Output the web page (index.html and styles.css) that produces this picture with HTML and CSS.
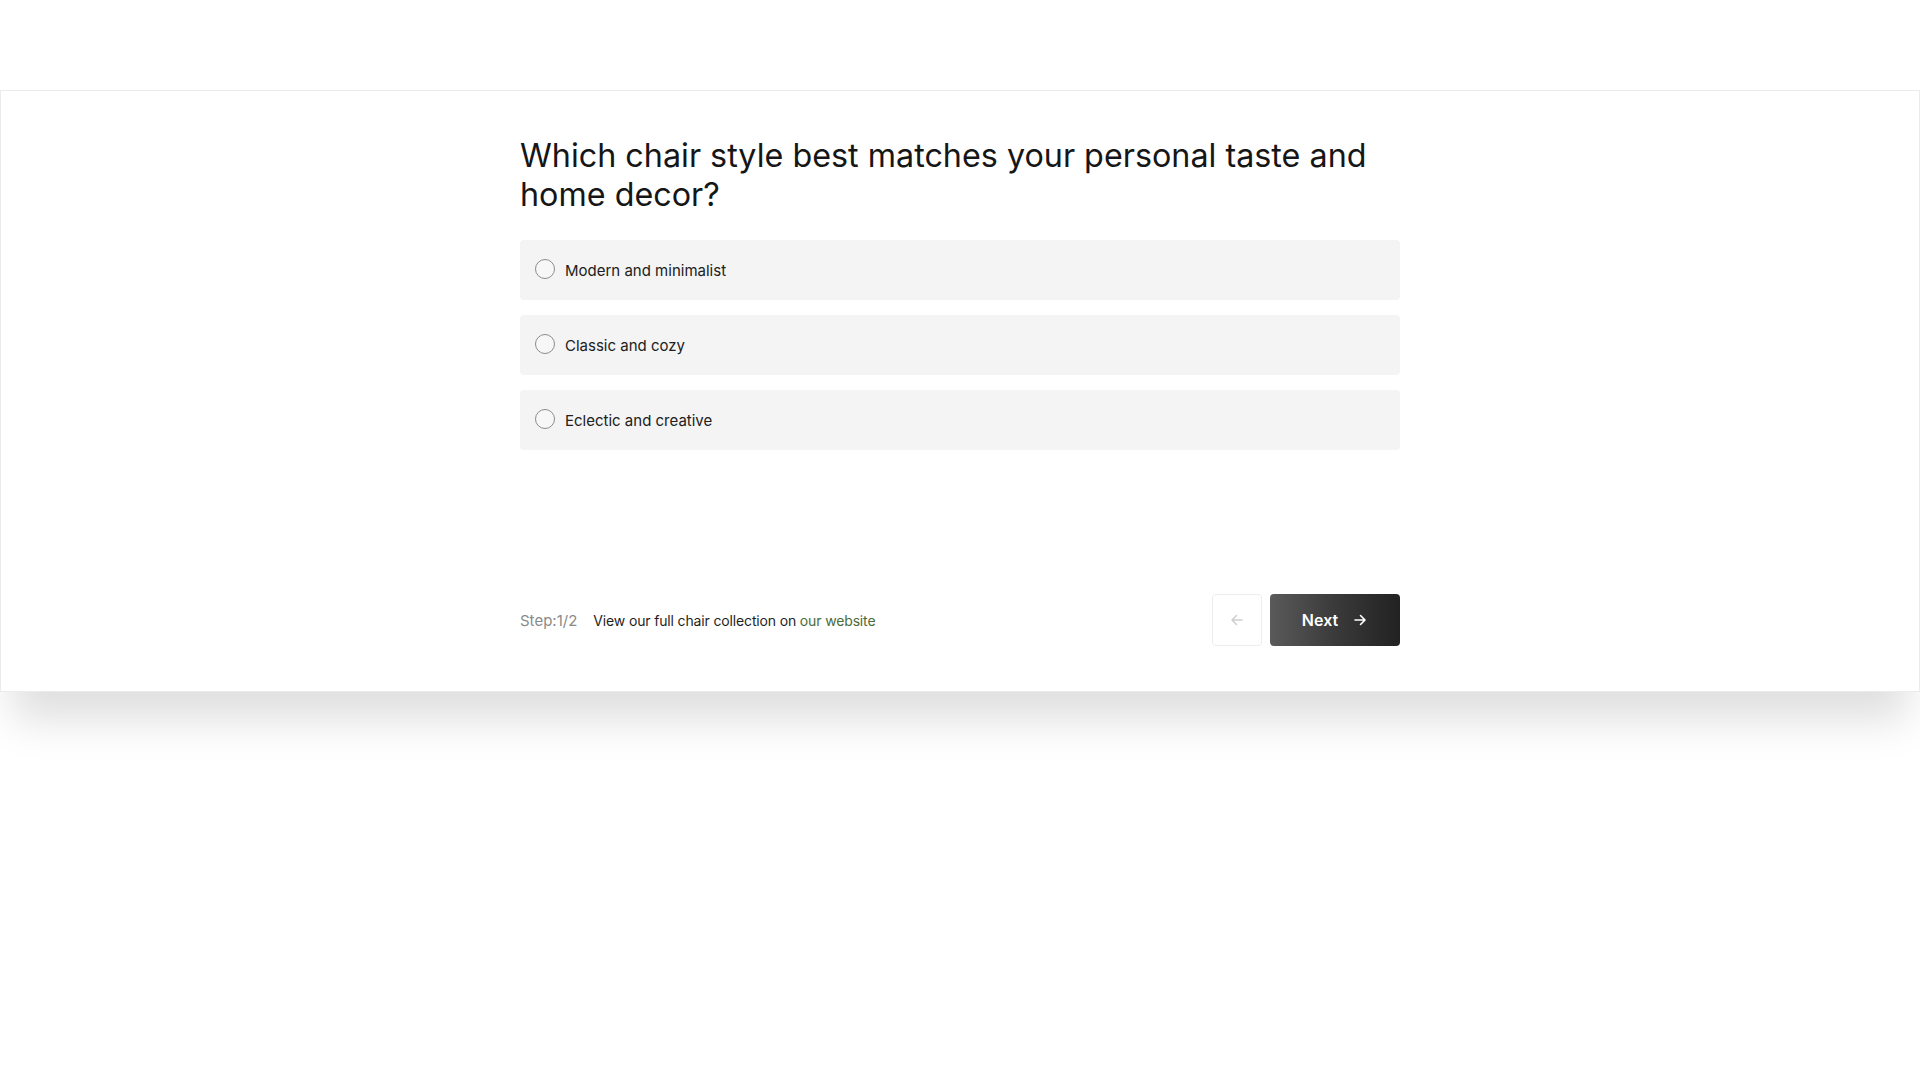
FILE: index.html
```html
<!DOCTYPE html>
<html lang="en">
<head>
<meta charset="utf-8">
<title>Chair style quiz</title>
<link rel="stylesheet" href="styles.css">
</head>
<body>
<div class="page">
  <section class="card">
    <div class="inner">
      <h1 class="question">Which chair style best matches your personal taste and home decor?</h1>
      <div class="options">
        <label class="option"><span class="radio"></span><span class="option-text">Modern and minimalist</span></label>
        <label class="option"><span class="radio"></span><span class="option-text">Classic and cozy</span></label>
        <label class="option"><span class="radio"></span><span class="option-text">Eclectic and creative</span></label>
      </div>
      <div class="footer">
        <div class="footer-left">
          <span class="step">Step:1/2</span>
          <span class="collection">View our full chair collection on <a class="link" href="#">our website</a></span>
        </div>
        <div class="nav">
          <button class="btn-back" type="button" aria-label="Back">
            <svg width="16" height="16" viewBox="0 0 16 16" fill="none" stroke="currentColor" stroke-width="1.5" stroke-linecap="round" stroke-linejoin="round"><path d="M13 8H3M7.5 3.5L3 8l4.5 4.5"/></svg>
          </button>
          <button class="btn-next" type="button">
            <span>Next</span>
            <svg width="16" height="16" viewBox="0 0 16 16" fill="none" stroke="currentColor" stroke-width="1.6" stroke-linecap="round" stroke-linejoin="round"><path d="M3 8h10M8.5 3.5L13 8l-4.5 4.5"/></svg>
          </button>
        </div>
      </div>
    </div>
  </section>
</div>
</body>
</html>
```

FILE: styles.css
```css
html, body {
  margin: 0;
  padding: 0;
  background: #ffffff;
}

body {
  font-family: Inter, "Noto Sans", "Liberation Sans", sans-serif;
  color: #1a1a1a;
}

.page {
  padding-top: 90px;
  padding-bottom: 120px;
}

.card {
  box-sizing: border-box;
  width: 100%;
  background: #ffffff;
  border: 1px solid #ebebeb;
  padding: 45px 0 45px;
  box-shadow: 0 40px 40px -12px rgba(0, 0, 0, 0.13);
}

.inner {
  width: 880px;
  margin: 0 auto;
}

.question {
  margin: 0 0 26px;
  font-size: 32.3px;
  line-height: 39px;
  font-weight: 400;
  color: #161616;
}

.options {
  display: flex;
  flex-direction: column;
  gap: 15px;
}

.option {
  display: flex;
  align-items: center;
  gap: 10px;
  height: 60px;
  padding: 0 15px;
  background: #f4f4f4;
  border-radius: 4px;
  box-sizing: border-box;
  cursor: pointer;
}

.radio {
  box-sizing: border-box;
  width: 20px;
  height: 20px;
  border: 1.5px solid #8c8c8c;
  border-radius: 50%;
  flex: none;
  background: #f7f7f7;
  position: relative;
  top: -1px;
}

.option-text {
  font-size: 15px;
  color: #202020;
}

.footer {
  margin-top: 144px;
  display: flex;
  align-items: center;
  justify-content: space-between;
}

.footer-left {
  display: flex;
  align-items: center;
  gap: 16px;
}

.step {
  color: #8a8a8a;
  font-size: 15px;
}

.collection {
  color: #1f1f1f;
  font-size: 14px;
  letter-spacing: -0.15px;
}

.link {
  color: #4a6b3a;
  text-decoration: none;
}

.nav {
  display: flex;
  gap: 8px;
}

.btn-back {
  width: 50px;
  height: 52px;
  border: 1px solid #ececec;
  border-radius: 4px;
  background: #ffffff;
  color: #cfcfcf;
  display: flex;
  align-items: center;
  justify-content: center;
  padding: 0;
}

.btn-next {
  width: 130px;
  height: 52px;
  border: none;
  border-radius: 4px;
  background: linear-gradient(90deg, #5a5a5a 0%, #3a3a3a 50%, #222222 100%);
  color: #ffffff;
  display: flex;
  align-items: center;
  justify-content: center;
  gap: 14px;
  font-family: Inter, "Noto Sans", "Liberation Sans", sans-serif;
  font-size: 16px;
  font-weight: 600;
  padding: 0;
}
```
